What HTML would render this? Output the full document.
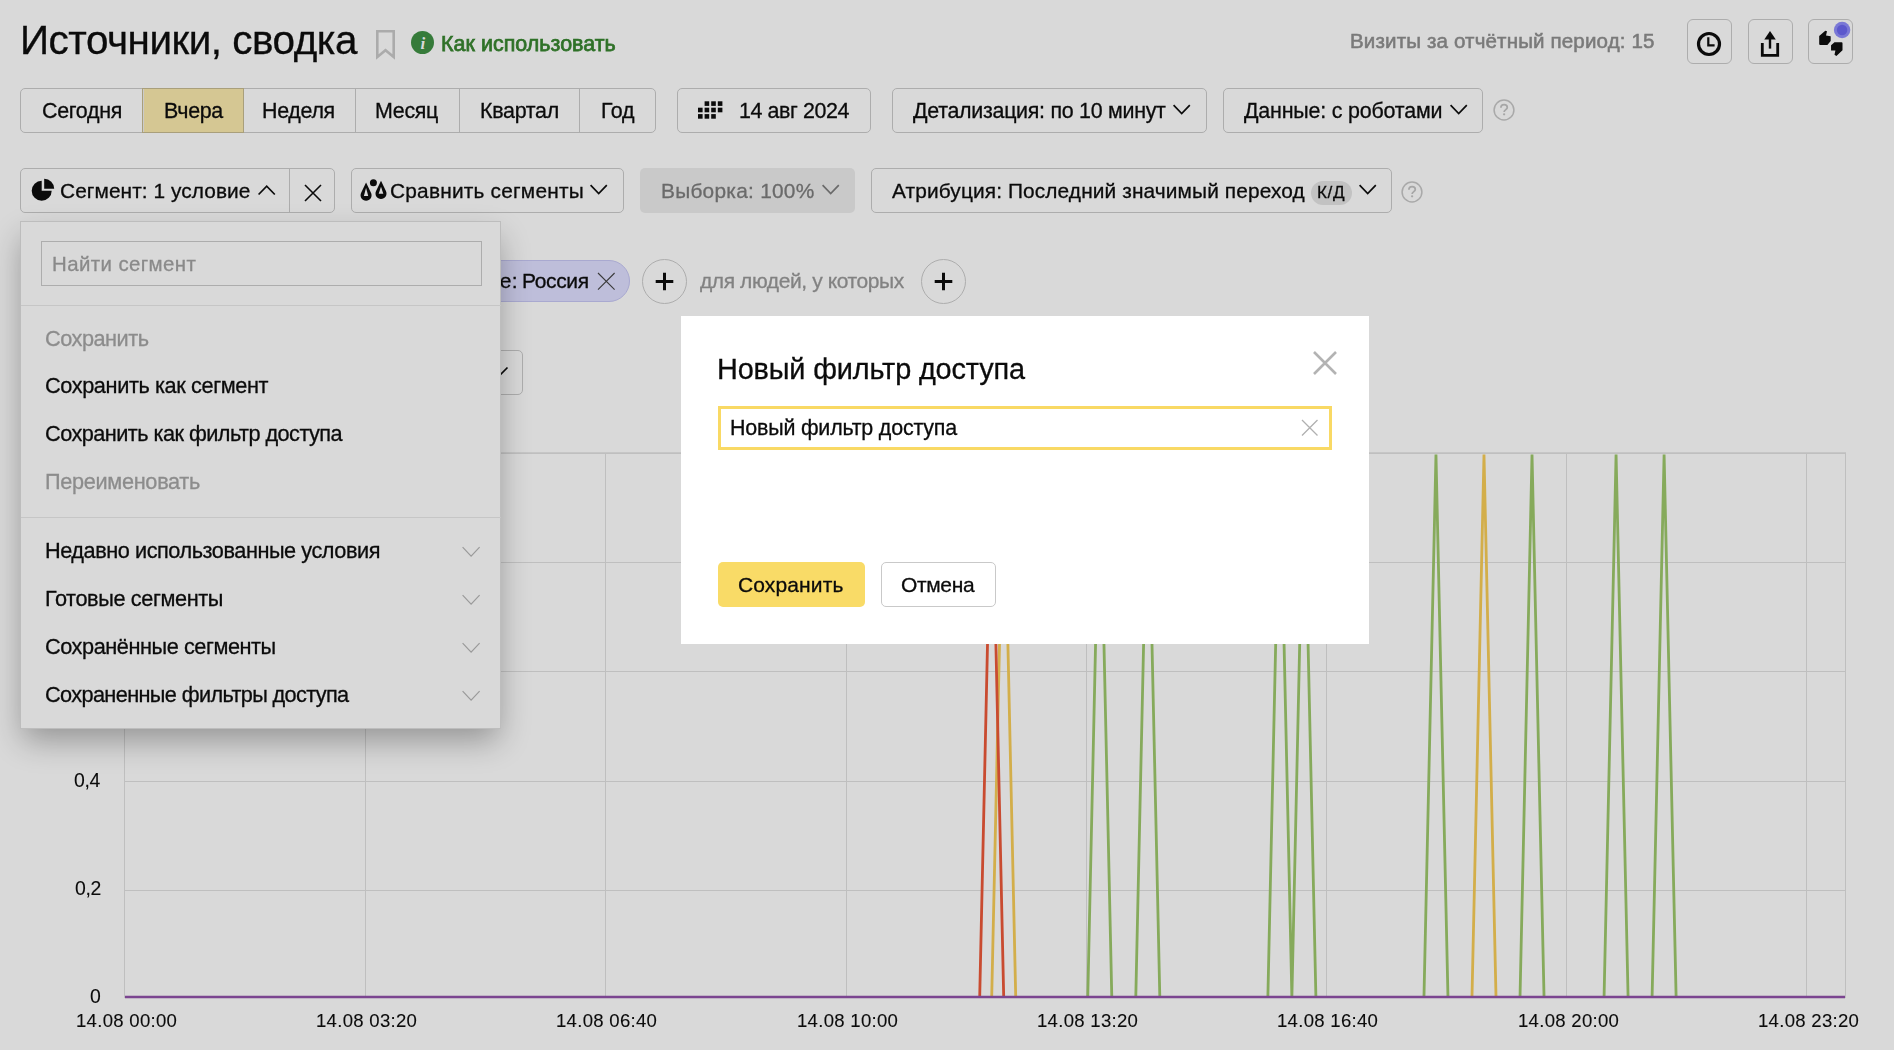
<!DOCTYPE html>
<html><head><meta charset="utf-8">
<style>
html,body{margin:0;padding:0;}
body{width:1894px;height:1050px;overflow:hidden;background:#d9d9d9;position:relative;font-family:"Liberation Sans",sans-serif;color:#0b0b0b;}
.a{position:absolute;}
.t{position:absolute;white-space:nowrap;line-height:0;will-change:transform;-webkit-text-stroke:0.3px currentColor;}
.box{position:absolute;box-sizing:border-box;border:1px solid #adadad;border-radius:5px;}
svg{position:absolute;overflow:visible;}
</style></head><body>

<svg style="left:0;top:0" width="1" height="1"><path d="M377.3,31.2 H393.7 V57 L385.5,50.2 L377.3,57 Z" fill="none" stroke="#ababab" stroke-width="2.6"/></svg>
<svg style="left:411px;top:30.5px" width="23" height="23"><circle cx="11.5" cy="11.5" r="11.5" fill="#367b3a"/><text x="11.8" y="17.6" text-anchor="middle" font-family="Liberation Serif" font-style="italic" font-weight="700" font-size="17" fill="#d9d9d9">i</text></svg>
<div class="box" style="left:1687px;top:19px;width:45px;height:45px;border-radius:6px"></div>
<div class="box" style="left:1748px;top:19px;width:45px;height:45px;border-radius:6px"></div>
<div class="box" style="left:1808px;top:19px;width:45px;height:45px;border-radius:6px"></div>
<svg style="left:1687px;top:19px" width="45" height="45"><circle cx="22" cy="25" r="10.5" fill="none" stroke="#0b0b0b" stroke-width="3.2"/><path d="M21.3,18.3 V26.3 H27.6" fill="none" stroke="#0b0b0b" stroke-width="2.2"/></svg>
<svg style="left:1748px;top:19px" width="45" height="45"><polygon points="22,12 27.8,20.6 16.3,20.6" fill="#0b0b0b"/><rect x="20.8" y="20" width="2.4" height="9.6" fill="#0b0b0b"/><path d="M14.3,24 V36.3 H29.7 V24" fill="none" stroke="#0b0b0b" stroke-width="2.8"/></svg>
<svg style="left:1808px;top:19px" width="45" height="45"><path d="M11.2,17.1 L17.3,11.8 L19,12.2 L18,16.4 L22.7,17.2 L22.7,22 L19.4,25.9 L12.2,25.9 Q11.2,25.9 11.2,24.9 Z" fill="#0b0b0b"/><path d="M23.05,26.2 L26.5,23.2 L33.5,23.2 Q34.5,23.2 34.5,24.2 L34.5,31.2 L28.4,36.9 L26.5,35.8 L27.4,31.6 L23.05,31.6 Z" fill="#0b0b0b"/><circle cx="34.1" cy="11" r="8.2" fill="#7a78d6"/><circle cx="34.1" cy="11" r="5.2" fill="#5c58cc"/></svg>
<div class="box" style="left:20px;top:88px;width:636px;height:45px;border-radius:5px"></div>
<div class="a" style="left:142px;top:88px;width:102px;height:45px;background:#d5c793;box-sizing:border-box;border:1px solid #a99f7b;box-shadow:inset 1px 0 0 #cbcbcb"></div>
<div class="a" style="left:355px;top:89px;width:1px;height:43px;background:#adadad"></div>
<div class="a" style="left:459px;top:89px;width:1px;height:43px;background:#adadad"></div>
<div class="a" style="left:579px;top:89px;width:1px;height:43px;background:#adadad"></div>
<div class="box" style="left:677px;top:88px;width:194px;height:45px"></div>
<svg style="left:0;top:0" width="1" height="1"><rect x="704.6" y="101.3" width="4.6" height="4.6" fill="#0b0b0b"/><rect x="711.2" y="101.3" width="4.6" height="4.6" fill="#0b0b0b"/><rect x="717.8" y="101.3" width="4.6" height="4.6" fill="#0b0b0b"/><rect x="698.0" y="107.7" width="4.6" height="4.6" fill="#0b0b0b"/><rect x="704.6" y="107.7" width="4.6" height="4.6" fill="#0b0b0b"/><rect x="711.2" y="107.7" width="4.6" height="4.6" fill="#0b0b0b"/><rect x="717.8" y="107.7" width="4.6" height="4.6" fill="#0b0b0b"/><rect x="698.0" y="114.1" width="4.6" height="4.6" fill="#0b0b0b"/><rect x="704.6" y="114.1" width="4.6" height="4.6" fill="#0b0b0b"/><rect x="711.2" y="114.1" width="4.6" height="4.6" fill="#0b0b0b"/></svg>
<div class="box" style="left:892px;top:88px;width:315px;height:45px"></div>
<svg style="left:1173px;top:104px" width="1" height="1"><polyline points="0.6,1.2 8.7,9.5 16.8,1.2" fill="none" stroke="#0b0b0b" stroke-width="1.7"/></svg>
<div class="box" style="left:1223px;top:88px;width:260px;height:45px"></div>
<svg style="left:1449.5px;top:104px" width="1" height="1"><polyline points="0.6,1.2 8.7,9.5 16.8,1.2" fill="none" stroke="#0b0b0b" stroke-width="1.7"/></svg>
<svg style="left:1492.5px;top:99px" width="22" height="22"><g transform="translate(11,11)"><circle cx="0" cy="0" r="9.9" fill="none" stroke="#a9a9a9" stroke-width="1.5"/><path d="M-3.1,-2.3 C-3.1,-4.5 -1.5,-5.3 0.1,-5.3 C2,-5.3 3.3,-4.2 3.3,-2.5 C3.3,-0.5 0.1,-0.3 0.1,2" fill="none" stroke="#a6a6a6" stroke-width="1.7"/><circle cx="0.1" cy="4.3" r="1.15" fill="#a6a6a6"/></g></svg>
<div class="box" style="left:20px;top:168px;width:315px;height:45px"></div>
<div class="a" style="left:289px;top:169px;width:1px;height:43px;background:#adadad"></div>
<svg style="left:31px;top:178px" width="24" height="24"><path d="M10.7,2.8 A10,10 0 1 0 20.7,12.8 H10.7 Z" fill="#0b0b0b"/><path d="M13.2,0.8 A10,10 0 0 1 23.2,10.8 H13.2 Z" fill="#0b0b0b"/></svg>
<svg style="left:257.5px;top:185px" width="1" height="1"><polyline points="0.6,9.5 8.7,1.2 16.8,9.5" fill="none" stroke="#0b0b0b" stroke-width="1.7"/></svg>
<svg style="left:305.0px;top:185.0px" width="16" height="16"><path d="M0,0 L16,16 M16,0 L0,16" stroke="#0b0b0b" stroke-width="1.6"/></svg>
<div class="box" style="left:351px;top:168px;width:273px;height:45px"></div>
<svg style="left:356px;top:174px" width="34" height="32"><path d="M10.06,8.6 L5.15,18.81 A5.5,5.5 0 1 0 14.97,18.81 Z" fill="#0b0b0b"/><path d="M25,6.8 L20.09,17.02 A5.5,5.5 0 1 0 29.91,17.02 Z" fill="#0b0b0b"/><path d="M10.06,13.7 L7.9,21.95 H12.2 Z" fill="#d9d9d9"/><path d="M25,12.8 L22.7,19.8 H27.3 Z" fill="#d9d9d9"/><circle cx="17.4" cy="8.8" r="3.5" fill="#0b0b0b"/></svg>
<svg style="left:590px;top:184.3px" width="1" height="1"><polyline points="0.6,1.2 8.7,9.5 16.8,1.2" fill="none" stroke="#0b0b0b" stroke-width="1.7"/></svg>
<div class="a" style="left:640px;top:168px;width:215px;height:45px;background:#c9c9c9;border-radius:5px"></div>
<svg style="left:822px;top:184.3px" width="1" height="1"><polyline points="0.6,1.2 8.7,9.5 16.8,1.2" fill="none" stroke="#6a6a6a" stroke-width="1.7"/></svg>
<div class="box" style="left:871px;top:168px;width:521px;height:45px"></div>
<div class="a" style="left:1311px;top:181px;width:40.5px;height:23.5px;background:#c2c2c2;border-radius:12px"></div>
<svg style="left:1359px;top:184.3px" width="1" height="1"><polyline points="0.6,1.2 8.7,9.5 16.8,1.2" fill="none" stroke="#0b0b0b" stroke-width="1.7"/></svg>
<svg style="left:1401.4px;top:181px" width="22" height="22"><g transform="translate(11,11)"><circle cx="0" cy="0" r="9.9" fill="none" stroke="#a9a9a9" stroke-width="1.5"/><path d="M-3.1,-2.3 C-3.1,-4.5 -1.5,-5.3 0.1,-5.3 C2,-5.3 3.3,-4.2 3.3,-2.5 C3.3,-0.5 0.1,-0.3 0.1,2" fill="none" stroke="#a6a6a6" stroke-width="1.7"/><circle cx="0.1" cy="4.3" r="1.15" fill="#a6a6a6"/></g></svg>
<div class="a" style="left:420px;top:260px;width:210px;height:42px;box-sizing:border-box;background:#bebeda;border:1px solid #a9a9d0;border-radius:21px"></div>
<svg style="left:598.1px;top:273.2px" width="16.6" height="16.6"><path d="M0,0 L16.6,16.6 M16.6,0 L0,16.6" stroke="#3a3a3a" stroke-width="1.1"/></svg>
<svg style="left:641.9px;top:258.8px" width="45" height="45"><circle cx="22.5" cy="22.5" r="22" fill="none" stroke="#adadad" stroke-width="1"/><path d="M22.5,13.7 V31.3 M13.7,22.5 H31.3" stroke="#0b0b0b" stroke-width="3"/></svg>
<svg style="left:921.2px;top:258.8px" width="45" height="45"><circle cx="22.5" cy="22.5" r="22" fill="none" stroke="#adadad" stroke-width="1"/><path d="M22.5,13.7 V31.3 M13.7,22.5 H31.3" stroke="#0b0b0b" stroke-width="3"/></svg>
<div class="box" style="left:380px;top:350px;width:143px;height:45px"></div>
<svg style="left:0;top:0" width="1" height="1"><polyline points="492.5,367.5 500,375 507.5,367.5" fill="none" stroke="#0b0b0b" stroke-width="1.7"/></svg>
<div class="a" style="left:124px;top:452px;width:1722px;height:2px;background:#c6c6c6"></div>
<div class="a" style="left:124px;top:453px;width:1722px;height:1px;background:#bfbfbf"></div>
<div class="a" style="left:124px;top:562px;width:1722px;height:1px;background:#bfbfbf"></div>
<div class="a" style="left:124px;top:671px;width:1722px;height:1px;background:#bfbfbf"></div>
<div class="a" style="left:124px;top:781px;width:1722px;height:1px;background:#bfbfbf"></div>
<div class="a" style="left:124px;top:890px;width:1722px;height:1px;background:#bfbfbf"></div>
<div class="a" style="left:124px;top:453px;width:1px;height:545px;background:#bfbfbf"></div>
<div class="a" style="left:365px;top:453px;width:1px;height:545px;background:#bfbfbf"></div>
<div class="a" style="left:605px;top:453px;width:1px;height:545px;background:#bfbfbf"></div>
<div class="a" style="left:846px;top:453px;width:1px;height:545px;background:#bfbfbf"></div>
<div class="a" style="left:1086px;top:453px;width:1px;height:545px;background:#bfbfbf"></div>
<div class="a" style="left:1326px;top:453px;width:1px;height:545px;background:#bfbfbf"></div>
<div class="a" style="left:1566px;top:453px;width:1px;height:545px;background:#bfbfbf"></div>
<div class="a" style="left:1806px;top:453px;width:1px;height:545px;background:#bfbfbf"></div>
<div class="a" style="left:1845px;top:453px;width:1px;height:545px;background:#bfbfbf"></div>
<svg style="left:0;top:0" width="1894" height="1050"><path d="M1087.76,997 L1099.77,454.5 L1111.78,997 M1135.79,997 L1147.80,454.5 L1159.81,997 M1267.87,997 L1279.88,454.5 L1291.88,997 M1291.88,997 L1303.89,454.5 L1315.90,997 M1423.96,997 L1435.97,454.5 L1447.97,997 M1520.02,997 L1532.02,454.5 L1544.03,997 M1604.06,997 L1616.07,454.5 L1628.08,997 M1652.09,997 L1664.10,454.5 L1676.11,997 " stroke="#86aa5b" stroke-width="2.8" fill="none" stroke-linejoin="miter" stroke-miterlimit="20"/><path d="M991.71,997 L1003.71,454.5 L1015.72,997 M1471.99,997 L1483.99,454.5 L1496.00,997 " stroke="#d3ae4a" stroke-width="2.8" fill="none" stroke-linejoin="miter" stroke-miterlimit="20"/><path d="M979.70,997 L991.71,454.5 L1003.71,997 " stroke="#c94b30" stroke-width="2.8" fill="none" stroke-linejoin="miter" stroke-miterlimit="20"/><line x1="125" y1="997" x2="1845" y2="997" stroke="#7b4590" stroke-width="2.4"/></svg>
<div class="t" style="left:20.10px;top:39.99px;font-size:40.43px;letter-spacing:-0.480px;">Источники, сводка</div>
<div class="t" style="left:441.40px;top:43.77px;font-size:21.43px;letter-spacing:0.041px;color:#2f7128;-webkit-text-stroke:0.75px currentColor;">Как использовать</div>
<div class="t" style="left:1349.50px;top:41.27px;font-size:20.57px;letter-spacing:0.138px;color:#7a7a7a;-webkit-text-stroke:0.55px currentColor;">Визиты за отчётный период: 15</div>
<div class="t" style="left:41.75px;top:110.77px;font-size:21.43px;letter-spacing:-0.300px;">Сегодня</div>
<div class="t" style="left:163.52px;top:110.77px;font-size:21.43px;letter-spacing:-0.300px;">Вчера</div>
<div class="t" style="left:262.39px;top:110.77px;font-size:21.43px;letter-spacing:-0.300px;">Неделя</div>
<div class="t" style="left:375.14px;top:110.77px;font-size:21.43px;letter-spacing:-0.300px;">Месяц</div>
<div class="t" style="left:479.77px;top:110.77px;font-size:21.43px;letter-spacing:-0.300px;">Квартал</div>
<div class="t" style="left:600.70px;top:110.77px;font-size:21.43px;letter-spacing:-0.300px;">Год</div>
<div class="t" style="left:738.70px;top:110.77px;font-size:21.43px;letter-spacing:-0.418px;">14 авг 2024</div>
<div class="t" style="left:912.70px;top:110.77px;font-size:21.43px;letter-spacing:-0.283px;">Детализация: по 10 минут</div>
<div class="t" style="left:1244.20px;top:110.77px;font-size:21.43px;letter-spacing:-0.189px;">Данные: с роботами</div>
<div class="t" style="left:60.20px;top:190.77px;font-size:20.86px;letter-spacing:0.068px;">Сегмент: 1 условие</div>
<div class="t" style="left:390.30px;top:190.77px;font-size:20.86px;letter-spacing:0.207px;">Сравнить сегменты</div>
<div class="t" style="left:660.60px;top:190.77px;font-size:20.86px;letter-spacing:0.255px;color:#6a6a6a;">Выборка: 100%</div>
<div class="t" style="left:891.50px;top:190.77px;font-size:20.86px;letter-spacing:0.117px;">Атрибуция: Последний значимый переход</div>
<div class="t" style="left:1317.00px;top:192.36px;font-size:17.14px;letter-spacing:0.633px;color:#0b0b0b;">К/Д</div>
<div class="t" style="left:338.17px;top:280.72px;font-size:21.00px;letter-spacing:0.400px;">Местоположение:</div>
<div class="t" style="left:521.70px;top:280.72px;font-size:21.00px;letter-spacing:-0.359px;">Россия</div>
<div class="t" style="left:700.00px;top:280.72px;font-size:21.00px;letter-spacing:-0.405px;color:#828282;">для людей, у которых</div>
<div class="t" style="left:74.10px;top:779.57px;font-size:19.43px;letter-spacing:-0.300px;-webkit-text-stroke:0.1px currentColor;">0,4</div>
<div class="t" style="left:75.10px;top:888.27px;font-size:19.43px;letter-spacing:-0.300px;-webkit-text-stroke:0.1px currentColor;">0,2</div>
<div class="t" style="left:89.70px;top:995.97px;font-size:19.43px;letter-spacing:0.000px;-webkit-text-stroke:0.1px currentColor;">0</div>
<div class="t" style="left:75.60px;top:1021.37px;font-size:18.57px;letter-spacing:0.286px;-webkit-text-stroke:0.1px currentColor;">14.08 00:00</div>
<div class="t" style="left:315.95px;top:1021.37px;font-size:18.57px;letter-spacing:0.286px;-webkit-text-stroke:0.1px currentColor;">14.08 03:20</div>
<div class="t" style="left:556.30px;top:1021.37px;font-size:18.57px;letter-spacing:0.286px;-webkit-text-stroke:0.1px currentColor;">14.08 06:40</div>
<div class="t" style="left:796.65px;top:1021.37px;font-size:18.57px;letter-spacing:0.286px;-webkit-text-stroke:0.1px currentColor;">14.08 10:00</div>
<div class="t" style="left:1037.00px;top:1021.37px;font-size:18.57px;letter-spacing:0.286px;-webkit-text-stroke:0.1px currentColor;">14.08 13:20</div>
<div class="t" style="left:1277.35px;top:1021.37px;font-size:18.57px;letter-spacing:0.286px;-webkit-text-stroke:0.1px currentColor;">14.08 16:40</div>
<div class="t" style="left:1517.70px;top:1021.37px;font-size:18.57px;letter-spacing:0.286px;-webkit-text-stroke:0.1px currentColor;">14.08 20:00</div>
<div class="t" style="left:1758.05px;top:1021.37px;font-size:18.57px;letter-spacing:0.286px;-webkit-text-stroke:0.1px currentColor;">14.08 23:20</div>
<div class="a" style="left:20px;top:221px;width:481px;height:508px;box-sizing:border-box;background:#d9d9d9;border:1px solid #bdbdbd;box-shadow:0 14px 30px -3px rgba(0,0,0,0.32)"></div>
<div class="a" style="left:41px;top:241px;width:441px;height:45px;box-sizing:border-box;border:1px solid #adadad"></div>
<div class="a" style="left:21px;top:305px;width:480px;height:1px;background:#c6c6c6"></div>
<div class="a" style="left:21px;top:517px;width:480px;height:1px;background:#c6c6c6"></div>
<svg style="left:462px;top:546.4px" width="1" height="1"><polyline points="0.6,1.2 9.1,10.2 17.6,1.2" fill="none" stroke="#9a9a9a" stroke-width="1.2"/></svg>
<svg style="left:462px;top:594.4px" width="1" height="1"><polyline points="0.6,1.2 9.1,10.2 17.6,1.2" fill="none" stroke="#9a9a9a" stroke-width="1.2"/></svg>
<svg style="left:462px;top:642.4px" width="1" height="1"><polyline points="0.6,1.2 9.1,10.2 17.6,1.2" fill="none" stroke="#9a9a9a" stroke-width="1.2"/></svg>
<svg style="left:462px;top:690.4px" width="1" height="1"><polyline points="0.6,1.2 9.1,10.2 17.6,1.2" fill="none" stroke="#9a9a9a" stroke-width="1.2"/></svg>
<div class="t" style="left:52.00px;top:263.92px;font-size:20.43px;letter-spacing:0.405px;color:#8a8a8a;">Найти сегмент</div>
<div class="t" style="left:45.20px;top:339.18px;font-size:21.71px;letter-spacing:-0.480px;color:#8c8c8c;">Сохранить</div>
<div class="t" style="left:45.20px;top:386.28px;font-size:21.71px;letter-spacing:-0.388px;">Сохранить как сегмент</div>
<div class="t" style="left:45.20px;top:434.48px;font-size:21.71px;letter-spacing:-0.538px;">Сохранить как фильтр доступа</div>
<div class="t" style="left:45.20px;top:482.28px;font-size:21.71px;letter-spacing:-0.317px;color:#8c8c8c;">Переименовать</div>
<div class="t" style="left:44.90px;top:550.78px;font-size:21.71px;letter-spacing:-0.452px;">Недавно использованные условия</div>
<div class="t" style="left:44.90px;top:598.78px;font-size:21.71px;letter-spacing:-0.390px;">Готовые сегменты</div>
<div class="t" style="left:44.90px;top:646.58px;font-size:21.71px;letter-spacing:-0.441px;">Сохранённые сегменты</div>
<div class="t" style="left:44.90px;top:694.68px;font-size:21.71px;letter-spacing:-0.630px;">Сохраненные фильтры доступа</div>
<div class="a" style="left:681px;top:316px;width:688px;height:328px;background:#fff"></div>
<svg style="left:1314.0px;top:352.0px" width="22" height="22"><path d="M0,0 L22,22 M22,0 L0,22" stroke="#b3b3b3" stroke-width="2.6"/></svg>
<div class="a" style="left:718px;top:406px;width:614px;height:44px;box-sizing:border-box;border:3px solid #f9d964;background:#fff"></div>
<svg style="left:1302.25px;top:420.25px" width="15.5" height="15.5"><path d="M0,0 L15.5,15.5 M15.5,0 L0,15.5" stroke="#b0b0b0" stroke-width="1.3"/></svg>
<div class="a" style="left:718px;top:562px;width:147px;height:45px;background:#f9db67;border-radius:5px"></div>
<div class="a" style="left:881px;top:562px;width:115px;height:45px;box-sizing:border-box;border:1px solid #c9c9c9;border-radius:5px"></div>
<div class="t" style="left:717.20px;top:369.20px;font-size:28.86px;letter-spacing:-0.152px;">Новый фильтр доступа</div>
<div class="t" style="left:729.80px;top:427.97px;font-size:21.43px;letter-spacing:-0.191px;">Новый фильтр доступа</div>
<div class="t" style="left:738.30px;top:584.72px;font-size:21.00px;letter-spacing:0.123px;">Сохранить</div>
<div class="t" style="left:901.10px;top:584.72px;font-size:21.00px;letter-spacing:-0.353px;">Отмена</div>
</body></html>
